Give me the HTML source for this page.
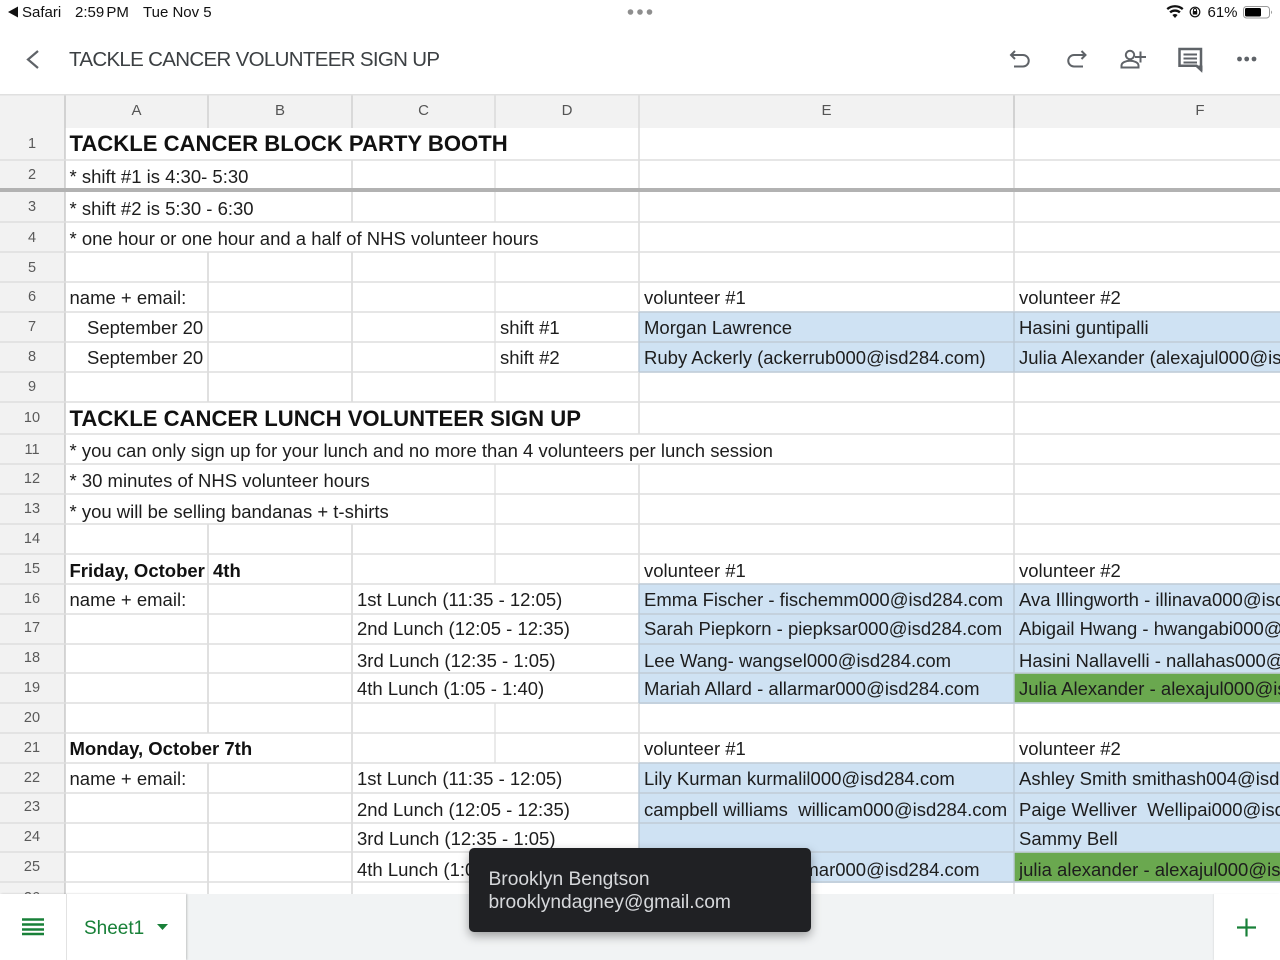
<!DOCTYPE html>
<html><head><meta charset="utf-8"><style>
html,body{margin:0;padding:0;width:1280px;height:960px;overflow:hidden;background:#fff;font-family:"Liberation Sans",sans-serif}
.a{position:absolute;white-space:nowrap}
.t{position:absolute;white-space:nowrap;font-size:18.5px;line-height:24px;color:#1d1d1d;height:24px}
.b{font-weight:bold;color:#111}
.h{font-weight:bold;font-size:22.1px;color:#111}
.n{position:absolute;left:0;width:64px;text-align:center;font-size:14.5px;line-height:20px;color:#5a5a5a;margin-top:1px}
.c{position:absolute;top:101px;text-align:center;font-size:15px;line-height:20px;color:#555}
.f{position:absolute;overflow:hidden;white-space:nowrap}
.s{font-size:15px;line-height:18px;color:#111;top:4px}
</style></head><body>
<svg class="a" style="left:0;top:0" width="1280" height="960">
<rect x="0" y="95" width="1280" height="33" fill="#f2f2f2"/>
<rect x="0" y="128" width="65" height="770" fill="#f2f2f2"/>
<g fill="#cfe2f3">
<rect x="639" y="312" width="641" height="60"/>
<rect x="639" y="584" width="641" height="120"/>
<rect x="639" y="763" width="641" height="120"/>
</g>
<rect x="1014" y="673" width="266" height="30" fill="#6aa84f"/>
<rect x="1014" y="852" width="266" height="30" fill="#6aa84f"/>
<path stroke="#dcdcdc" stroke-width="1.800" fill="none" d="M208 252V402M208 524V733M208 763V895M352 160V222M352 252V402M352 524V895"/>
<path stroke="#dcdcdc" stroke-width="1.200" fill="none" d="M495 160V222M495 252V402M495 464V584M495 703V763"/>
<path stroke="#d0d0d0" stroke-width="1.200" fill="none" d="M639 128V434M639 464V895M1014 128V895"/>
<path stroke="#bdbdbd" stroke-width="1.200" fill="none" d="M65 95V895M1014 95V128"/>
<path stroke="#d6d6d6" stroke-width="1.800" fill="none" d="M208 95V128M352 95V128"/>
<path stroke="#d4d4d4" stroke-width="1.200" fill="none" d="M495 95V128M639 95V128"/>
<path stroke="#dedede" stroke-width="1.600" fill="none" d="M0 160H1280M0 222H1280M0 252H1280M0 282H1280M0 312H1280M0 342H1280M0 372H1280M0 402H1280M0 434H1280M0 464H1280M0 494H1280M0 524H1280M0 554H1280M0 584H1280M0 614H1280M0 644H1280M0 673H1280M0 703H1280M0 733H1280M0 763H1280M0 793H1280M0 823H1280M0 852H1280M0 882H1280"/>
<path stroke="#b9c8d6" stroke-width="1.300" fill="none" d="M639 312H1280M639 342H1280M639 372H1280M639 584H1280M639 614H1280M639 644H1280M639 673H1280M639 703H1280M639 763H1280M639 793H1280M639 823H1280M639 852H1280M639 882H1280M639 312V372M639 584V703M639 763V882M1014 312V372M1014 584V703M1014 763V882"/>
<rect x="0" y="188" width="1280" height="4" fill="#b2b2b2"/>
<rect x="0" y="94" width="1280" height="1.500" fill="#e0e0e0"/>
</svg>

<svg class="a" style="left:0;top:0" width="20" height="24"><path d="M8 12L18 6.500V17.500Z" fill="#111"/></svg>
<div class="a s" style="left:22px">Safari</div>
<div class="a s" style="left:75px;word-spacing:-2px">2:59 PM</div>
<div class="a s" style="left:143px">Tue Nov 5</div>
<div class="a s" style="left:1207.500px">61%</div>
<svg class="a" style="left:0;top:0" width="1280" height="92">
<g fill="#8e8e8e"><circle cx="630.500" cy="12" r="2.800"/><circle cx="640" cy="12" r="2.800"/><circle cx="649.500" cy="12" r="2.800"/></g>
<path fill="#111" d="M1175 18l-2.600-3a3.900 3.900 0 0 1 5.200 0zM1170.900 13.300l-1.600-1.800a8.700 8.700 0 0 1 11.400 0l-1.600 1.800a6.300 6.300 0 0 0-8.200 0zM1168 10l-1.500-1.700a12.800 12.800 0 0 1 17 0l-1.500 1.700a10.600 10.600 0 0 0-14 0z"/>
<circle cx="1195" cy="12" r="4.800" fill="none" stroke="#111" stroke-width="1.200"/><rect x="1192.800" y="11" width="4.400" height="3.500" fill="#111"/><path d="M1193.500 11V10a1.500 1.500 0 0 1 3 0v1" fill="none" stroke="#111" stroke-width="1"/>
<rect x="1243.500" y="6.500" width="26" height="11.500" rx="3" fill="none" stroke="#9a9a9a"/><rect x="1245" y="8" width="16" height="8.500" rx="1.500" fill="#000"/><path d="M1271 10.500a2 2 0 0 1 0 3.500z" fill="#9a9a9a"/>
<g fill="none" stroke="#5f6368" stroke-width="2">
<path d="M38 51L28 59.500L38 68" stroke-width="2.200"/>
<path d="M1015 51L1011 55L1015 59M1011 55H1023a5.700 5.700 0 0 1 0 11.500H1014"/>
<path d="M1081.500 51L1085.500 55L1081.500 59M1085.500 55H1074a5.700 5.700 0 0 0 0 11.500H1083"/>
<circle cx="1130" cy="55" r="4.200"/>
<path d="M1121.500 67.500V65.500C1121.500 62.500 1126 60.800 1130 60.800S1138.500 62.500 1138.500 65.500V67.500Z"/>
<path d="M1135 57H1146M1140.500 51.500V62.500"/>
<path d="M1179.500 49H1201V70L1196.500 65.800H1179.500Z" stroke-width="2.500"/>
<path d="M1183.500 54.500H1197M1183.500 58.500H1197M1183.500 62.500H1197" stroke-width="2"/>
</g>
<path d="M1196 65.500H1202.500V71.500Z" fill="#5f6368"/>
<g fill="#5f6368"><circle cx="1239.500" cy="59" r="2.400"/><circle cx="1246.700" cy="59" r="2.400"/><circle cx="1254" cy="59" r="2.400"/></g>
</svg>
<div class="a" style="left:69px;top:46px;font-size:20.500px;line-height:28px;color:#3c4043;letter-spacing:-.68px">TACKLE CANCER VOLUNTEER SIGN UP</div>

<div class="c" style="left:65px;width:143px">A</div><div class="c" style="left:208px;width:144px">B</div><div class="c" style="left:352px;width:143px">C</div><div class="c" style="left:495px;width:144px">D</div><div class="c" style="left:639px;width:375px">E</div><div class="c" style="left:1014px;width:372px">F</div>

<div class="n" style="top:133px">1</div><div class="n" style="top:164px">2</div><div class="n" style="top:196px">3</div><div class="n" style="top:227px">4</div><div class="n" style="top:257px">5</div><div class="n" style="top:286px">6</div><div class="n" style="top:316px">7</div><div class="n" style="top:346px">8</div><div class="n" style="top:376px">9</div><div class="n" style="top:407px">10</div><div class="n" style="top:439px">11</div><div class="n" style="top:468px">12</div><div class="n" style="top:498px">13</div><div class="n" style="top:528px">14</div><div class="n" style="top:558px">15</div><div class="n" style="top:588px">16</div><div class="n" style="top:617px">17</div><div class="n" style="top:647px">18</div><div class="n" style="top:677px">19</div><div class="n" style="top:707px">20</div><div class="n" style="top:737px">21</div><div class="n" style="top:767px">22</div><div class="n" style="top:796px">23</div><div class="n" style="top:826px">24</div><div class="n" style="top:856px">25</div><div class="n" style="top:887px">26</div>

<div class="t h" style="left:69.500px;top:132px">TACKLE CANCER BLOCK PARTY BOOTH</div>
<div class="t" style="left:69.500px;top:165px">* shift #1 is 4:30- 5:30</div>
<div class="t" style="left:69.500px;top:197px">* shift #2 is 5:30 - 6:30</div>
<div class="t" style="left:69.500px;top:227px">* one hour or one hour and a half of NHS volunteer hours</div>
<div class="t" style="left:69.500px;top:286px">name + email:</div>
<div class="t" style="left:644px;top:286px">volunteer #1</div>
<div class="t" style="left:1019px;top:286px">volunteer #2</div>
<div class="t" style="left:87px;top:316px">September 20</div>
<div class="t" style="left:500px;top:316px">shift #1</div>
<div class="t" style="left:644px;top:316px">Morgan Lawrence</div>
<div class="t" style="left:1019px;top:316px">Hasini guntipalli</div>
<div class="t" style="left:87px;top:346px">September 20</div>
<div class="t" style="left:500px;top:346px">shift #2</div>
<div class="t" style="left:644px;top:346px">Ruby Ackerly (ackerrub000@isd284.com)</div>
<div class="f t" style="left:1019px;top:346px;width:261px">Julia Alexander (alexajul000@isd284.com)</div>
<div class="t h" style="left:69.500px;top:407px">TACKLE CANCER LUNCH VOLUNTEER SIGN UP</div>
<div class="t" style="left:69.500px;top:439px">* you can only sign up for your lunch and no more than 4 volunteers per lunch session</div>
<div class="t" style="left:69.500px;top:469px">* 30 minutes of NHS volunteer hours</div>
<div class="t" style="left:69.500px;top:500px">* you will be selling bandanas + t-shirts</div>
<div class="t b" style="left:69.500px;top:559px">Friday, October</div>
<div class="t b" style="left:213px;top:559px">4th</div>
<div class="t" style="left:644px;top:559px">volunteer #1</div>
<div class="t" style="left:1019px;top:559px">volunteer #2</div>
<div class="t" style="left:69.500px;top:588px">name + email:</div>
<div class="t" style="left:357px;top:588px">1st Lunch (11:35 - 12:05)</div>
<div class="t" style="left:644px;top:588px">Emma Fischer - fischemm000@isd284.com</div>
<div class="f t" style="left:1019px;top:588px;width:261px">Ava Illingworth - illinava000@isd284.com</div>
<div class="t" style="left:357px;top:617px">2nd Lunch (12:05 - 12:35)</div>
<div class="t" style="left:644px;top:617px">Sarah Piepkorn - piepksar000@isd284.com</div>
<div class="f t" style="left:1019px;top:617px;width:261px">Abigail Hwang - hwangabi000@isd284.com</div>
<div class="t" style="left:357px;top:649px">3rd Lunch (12:35 - 1:05)</div>
<div class="t" style="left:644px;top:649px">Lee Wang- wangsel000@isd284.com</div>
<div class="f t" style="left:1019px;top:649px;width:261px">Hasini Nallavelli - nallahas000@isd284.com</div>
<div class="t" style="left:357px;top:677px">4th Lunch (1:05 - 1:40)</div>
<div class="t" style="left:644px;top:677px">Mariah Allard - allarmar000@isd284.com</div>
<div class="f t" style="left:1019px;top:677px;width:261px">Julia Alexander - alexajul000@isd284.com</div>
<div class="t b" style="left:69.500px;top:737px">Monday, October 7th</div>
<div class="t" style="left:644px;top:737px">volunteer #1</div>
<div class="t" style="left:1019px;top:737px">volunteer #2</div>
<div class="t" style="left:69.500px;top:767px">name + email:</div>
<div class="t" style="left:357px;top:767px">1st Lunch (11:35 - 12:05)</div>
<div class="t" style="left:644px;top:767px">Lily Kurman kurmalil000@isd284.com</div>
<div class="f t" style="left:1019px;top:767px;width:261px">Ashley Smith smithash004@isd284.com</div>
<div class="t" style="left:357px;top:798px">2nd Lunch (12:05 - 12:35)</div>
<div class="t" style="left:644px;top:798px">campbell williams&nbsp; willicam000@isd284.com</div>
<div class="f t" style="left:1019px;top:798px;width:261px">Paige Welliver&nbsp; Wellipai000@isd284.com</div>
<div class="t" style="left:357px;top:827px">3rd Lunch (12:35 - 1:05)</div>
<div class="t" style="left:1019px;top:827px">Sammy Bell</div>
<div class="t" style="left:357px;top:858px">4th Lunch (1:05 - 1:40)</div>
<div class="t" style="left:644px;top:858px">Mariah Allard - allarmar000@isd284.com</div>
<div class="f t" style="left:1019px;top:858px;width:261px">julia alexander - alexajul000@isd284.com</div>

<div class="a" style="left:0;top:894px;width:1280px;height:66px;background:#f1f3f4"></div>
<div class="a" style="left:0;top:894px;width:186px;height:66px;background:#fff;box-shadow:1px 0 2px rgba(0,0,0,.2)"></div>
<div class="a" style="left:66px;top:894px;width:1px;height:66px;background:#e2e2e2"></div>
<div class="a" style="left:1214px;top:894px;width:66px;height:66px;background:#fff;box-shadow:-1px 0 1px rgba(0,0,0,.06)"></div>
<svg class="a" style="left:0;top:894px" width="1280" height="66">
<path d="M22 25.500H44M22 30.500H44M22 35.500H44M22 40H44" stroke="#188038" stroke-width="2.400" fill="none"/>
<path d="M157 30H168L162.500 36Z" fill="#188038"/>
<path d="M1246.500 24.500V42.500M1237 33.500H1256" stroke="#188038" stroke-width="2.200" fill="none"/>
</svg>
<div class="a" style="left:84px;top:915.500px;font-size:19px;line-height:24px;color:#188038;margin-top:1px">Sheet1</div>

<div class="a" style="left:469px;top:848px;width:342px;height:84px;background:#202124;border-radius:5px;box-shadow:0 4px 10px rgba(0,0,0,.35)"></div>
<div class="a" style="left:488.500px;top:869px;font-size:19.200px;line-height:22.500px;color:#d6d8db">Brooklyn Bengtson<br>brooklyndagney@gmail.com</div>
</body></html>
